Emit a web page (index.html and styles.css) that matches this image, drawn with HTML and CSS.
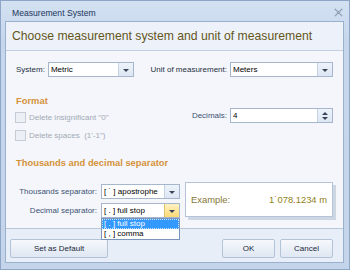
FILE: index.html
```html
<!DOCTYPE html>
<html>
<head>
    <title>Measurement System</title>
    <meta charset="utf-8" />
    <link rel="stylesheet" href="styles.css">
</head>
<body>
    <div class="window">
        <div class="titlebar">
            <span class="title">Measurement System</span>
            <svg class="close" width="9" height="9" viewBox="0 0 9 9">
                <path d="M1 1 L8 8 M8 1 L1 8" stroke="#8796ab" stroke-width="1.6" stroke-dasharray="1.2 0.6" />
            </svg>
        </div>
        <div class="client">
            <div class="header">Choose measurement system and unit of measurement</div>
            <div class="body">
                <div class="row-units">
                    <div class="field field-system">
                        <span class="label">System:</span>
                        <div class="combo combo-system"><span class="value">Metric</span><span class="drop"><i class="arrow"></i></span></div>
                    </div>
                    <div class="field">
                        <span class="label">Unit of measurement:</span>
                        <div class="combo combo-unit"><span class="value">Meters</span><span class="drop"><i class="arrow"></i></span></div>
                    </div>
                </div>
                <div class="format">
                    <div class="format-left">
                        <h3>Format</h3>
                        <div class="check"><i class="box"></i>Delete insignificant "0"</div>
                        <div class="check"><i class="box"></i>Delete spaces&nbsp; (1'-1")</div>
                    </div>
                    <div class="format-right">
                        <div class="field">
                            <span class="label label-soft">Decimals:</span>
                            <div class="combo combo-unit"><span class="value">4</span><span class="spin"><i class="up"></i><i class="down"></i></span></div>
                        </div>
                    </div>
                </div>
                <h3 class="sep-title">Thousands and decimal separator</h3>
                <div class="separators">
                    <div class="sep-fields">
                        <div class="field">
                            <span class="label label-soft sep-label">Thousands separator:</span>
                            <div class="combo combo-sep"><span class="value">[ ˙ ] apostrophe</span><span class="drop"><i class="arrow"></i></span></div>
                        </div>
                        <div class="field">
                            <span class="label label-soft sep-label">Decimal separator:</span>
                            <div class="combo combo-sep">
                                <span class="value">[ . ] full stop</span><span class="drop hot"><i class="arrow"></i></span>
                                <div class="list">
                                    <div class="item selected">[ . ] full stop</div>
                                    <div class="item">[ , ] comma</div>
                                </div>
                            </div>
                        </div>
                    </div>
                    <div class="example">
                        <span>Example:</span>
                        <span class="number">1<em>˙</em>078<em>.</em>1234 m</span>
                    </div>
                </div>
            </div>
            <div class="footer">
                <button class="btn btn-default">Set as Default</button>
                <span class="spacer"></span>
                <button class="btn btn-small">OK</button>
                <button class="btn btn-small">Cancel</button>
            </div>
        </div>
    </div>
</body>
</html>
```

FILE: styles.css
```css
html, body {
    margin: 0;
    padding: 0;
}
body {
    font-family: 'Liberation Sans', Arial, sans-serif;
    font-size: 8px;
    color: #1f2633;
}
.window {
    width: 350px;
    height: 270px;
    box-sizing: border-box;
    border: 1px solid #8ea7c6;
    background: linear-gradient(#d3e1f2, #c6d7ed 40px, #c3d4eb);
    display: flex;
    flex-direction: column;
}
.titlebar {
    height: 20px;
    display: flex;
    align-items: center;
    padding: 0 6px 0 11px;
}
.title {
    flex: 1;
    font-size: 8.6px;
    color: #1c355a;
    padding-top: 4px;
}
.close {
    margin-top: 3px;
}
.client {
    flex: 1;
    margin: 0 5px 6px 4px;
    border: 1px solid #9bb0cb;
    background: #f4f6fb;
    display: flex;
    flex-direction: column;
}
.header {
    height: 28px;
    line-height: 29px;
    padding-left: 6px;
    font-size: 12.2px;
    color: #64551a;
    background: #edf2fa;
    border-bottom: 1px solid #c3d0e1;
}
.body {
    flex: 1;
    padding: 11px 10px 0 10px;
}

/* fields */
.field {
    display: flex;
    align-items: center;
    height: 15px;
}
.label {
    white-space: nowrap;
    color: #26303f;
}
.label-soft {
    color: #3d5273;
}
.row-units {
    display: flex;
}
.field-system {
    width: 135px;
}
.combo {
    position: relative;
    height: 15px;
    box-sizing: border-box;
    border: 1px solid #a6b7cd;
    background: #fff;
    display: flex;
    align-items: center;
    margin-left: 3px;
}
.combo .value {
    flex: 1;
    padding-left: 2px;
    color: #000;
    white-space: nowrap;
    overflow: hidden;
}
.combo-system {
    width: 86px;
    margin-left: 3px;
}
.combo-unit {
    width: 103px;
}
.combo-sep {
    width: 79px;
    margin-left: 4px;
}
.drop, .spin {
    width: 14px;
    height: 13px;
    border-left: 1px solid #c5d2e2;
    background: linear-gradient(#eef3fa, #dce6f3);
    display: flex;
    flex-direction: column;
    align-items: center;
    justify-content: center;
}
.drop.hot {
    background: linear-gradient(#fff3c4, #fbd975);
    border-left-color: #e0c36e;
}
.arrow {
    width: 0;
    height: 0;
    border-left: 3px solid transparent;
    border-right: 3px solid transparent;
    border-top: 3px solid #3a4658;
    margin-top: 2px;
}
.spin .up, .spin .down {
    width: 0;
    height: 0;
    border-left: 3px solid transparent;
    border-right: 3px solid transparent;
}
.spin .up {
    border-bottom: 3px solid #3a4658;
    margin-bottom: 2px;
}
.spin .down {
    border-top: 3px solid #3a4658;
}

/* format section */
h3 {
    margin: 0;
    font-size: 9.4px;
    color: #d4923a;
    height: 15px;
    line-height: 15px;
}
.format {
    display: flex;
    margin-top: 16px;
}
.format-left {
    width: 170px;
}
.format-right {
    flex: 1;
    padding-top: 15px;
    display: flex;
    justify-content: flex-end;
}
.check {
    height: 18px;
    display: flex;
    align-items: center;
    color: #a2a9b5;
}
.box {
    width: 9px;
    height: 9px;
    border: 1px solid #c6ccd6;
    background: #eceff3;
    margin: 0 3px 0 -1px;
}
.sep-title {
    margin-top: 11px;
}

/* separators */
.separators {
    display: flex;
    margin-top: 12px;
}
.sep-fields {
    width: 164px;
    display: flex;
    flex-direction: column;
    gap: 4px;
    margin-top: 2px;
}
.sep-label {
    width: 81px;
    text-align: right;
}
.list {
    position: absolute;
    left: -1px;
    top: 14px;
    width: 77px;
    border: 1px solid #7a96ba;
    background: #fff;
    z-index: 5;
}
.item {
    height: 10px;
    line-height: 10px;
    padding-left: 2px;
    color: #000;
}
.item.selected {
    background: #3399ff;
    color: #fff;
    outline: 1px dotted #c8e2ff;
    outline-offset: -1px;
}
.example {
    width: 152px;
    height: 35px;
    box-sizing: border-box;
    margin-left: 5px;
    border: 1px solid #b5c4d8;
    background: #fff;
    box-shadow: 3px 3px 0 #cdd6e3;
    display: flex;
    align-items: center;
    justify-content: space-between;
    padding: 0 5px;
    font-size: 9.4px;
    color: #857638;
}
.example .number {
    color: #8f7f22;
}
.example em {
    font-style: normal;
    color: #e0241c;
}

/* footer */
.footer {
    height: 34px;
    border-top: 1px solid #b7c6d9;
    background: #e7eef8;
    display: flex;
    align-items: flex-start;
    padding: 10px 10px 0 4px;
    box-sizing: border-box;
    gap: 5px;
}
.spacer {
    flex: 1;
}
.btn {
    height: 19px;
    font-family: 'Liberation Sans', Arial, sans-serif;
    font-size: 8px;
    color: #1a2840;
    border: 1px solid #b3c3d7;
    border-radius: 2px;
    background: linear-gradient(#f6f8fc, #dfe7f2);
    padding: 0;
}
.btn-default {
    width: 98px;
}
.btn-small {
    width: 53px;
}
```
